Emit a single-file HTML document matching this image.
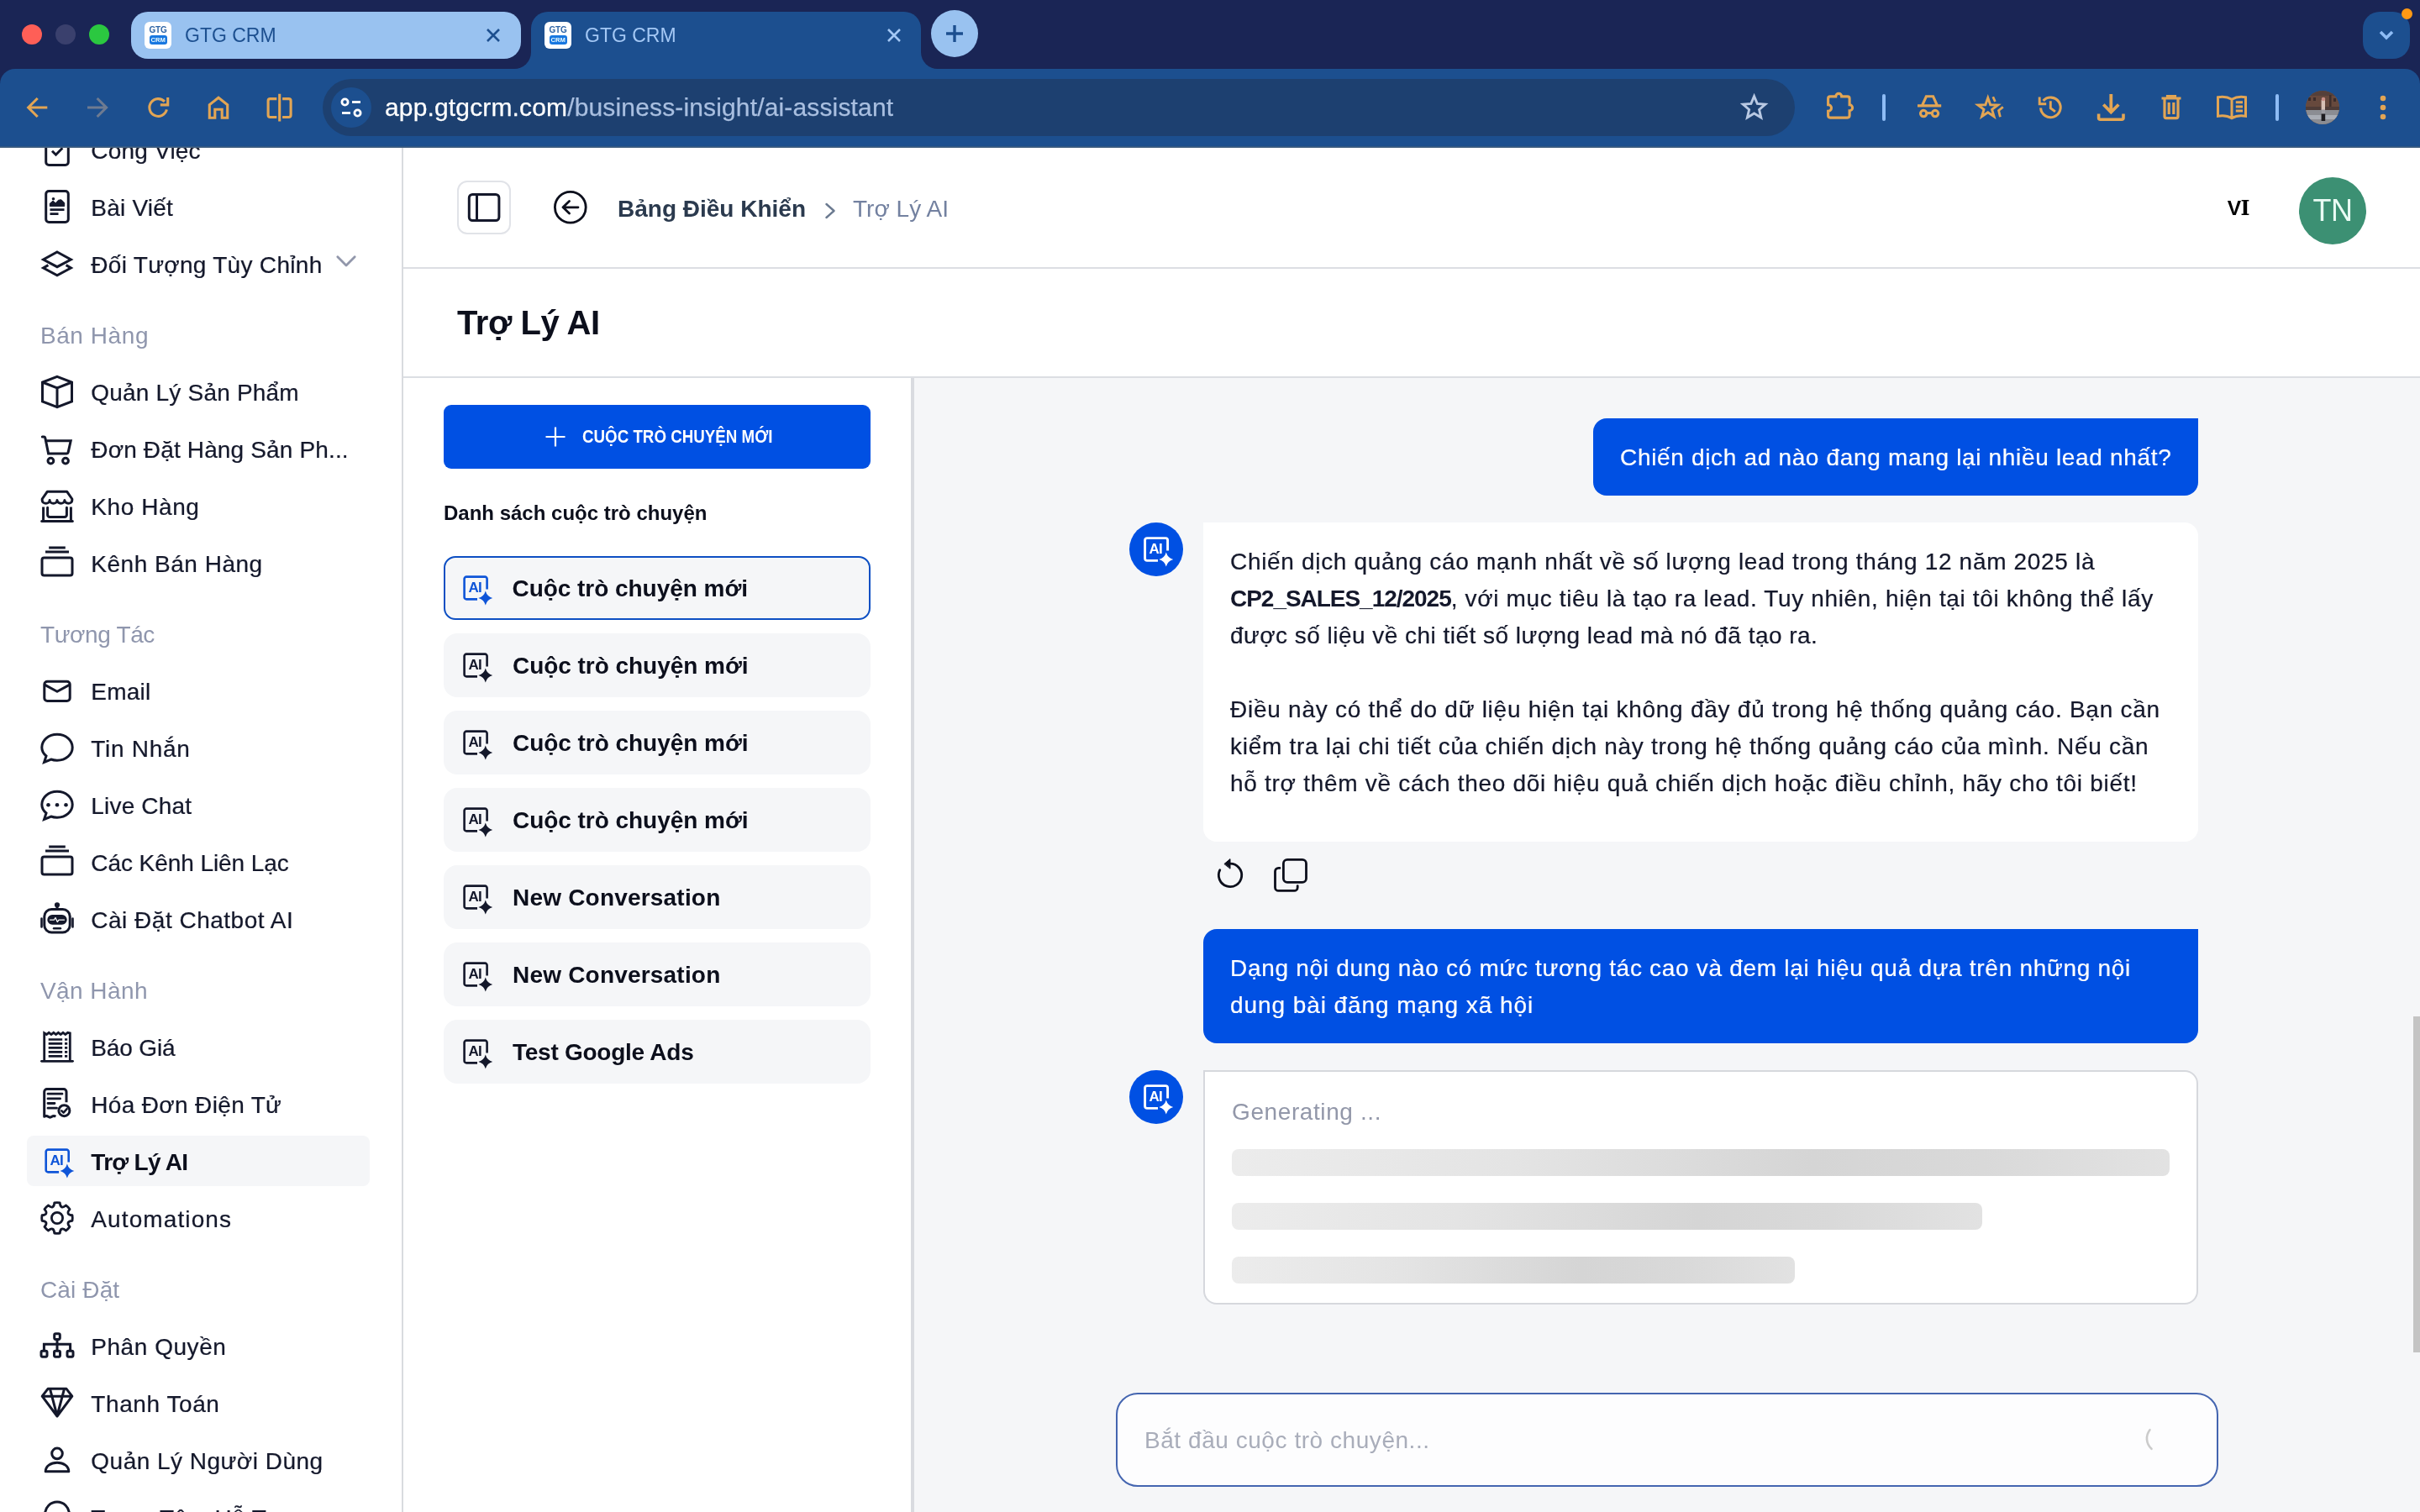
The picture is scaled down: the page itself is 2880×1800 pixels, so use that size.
<!DOCTYPE html>
<html lang="vi">
<head>
<meta charset="utf-8">
<title>GTG CRM</title>
<style>
*{box-sizing:border-box;margin:0;padding:0}
html,body{width:2880px;height:1800px;overflow:hidden;background:#fff}
body{position:relative;font-family:"Liberation Sans",sans-serif;color:#14182b;-webkit-font-smoothing:antialiased;will-change:transform}
.abs{position:absolute}
svg{display:block;overflow:visible}
.nw{white-space:nowrap}

/* ---------- browser chrome ---------- */
#strip{left:0;top:0;width:2880px;height:120px;background:#1a2555}
#toolbar{left:0;top:82px;width:2880px;height:93px;background:#1c4f8f;border-radius:18px 18px 0 0}
#toolshadow{left:0;top:173px;width:2880px;height:3px;background:linear-gradient(#1c4f8f 0,#1d4d88 33%,#3f5f82 60%,#47637f 100%);z-index:5}
.tl{width:24px;height:24px;border-radius:50%;top:29px}
#tab1{left:156px;top:14px;width:464px;height:56px;border-radius:20px;background:#99c2f0}
#tab2{left:632px;top:14px;width:464px;height:70px;border-radius:20px 20px 0 0;background:#1c4f8f}
.flare{width:20px;height:20px;top:62px;background:#1c4f8f}
.flare i{display:block;width:20px;height:20px;background:#1a2555}
.fav{width:32px;height:32px;border-radius:6px;background:#fff;top:26px;overflow:hidden}
.fav b{position:absolute;left:0;width:32px;text-align:center;font-size:10px;line-height:10px;font-weight:700;letter-spacing:-.2px}
.fav .g{top:5px;color:#2f65a6}
.fav .c{top:15.5px;left:5.5px;width:21.5px;height:11.5px;border-radius:3px;background:#1877e0;color:#e9fbff;font-size:7.6px;line-height:11.8px;letter-spacing:0}
.ttl{top:27px;font-size:23px;line-height:30px;white-space:nowrap}
#newtab{left:1108px;top:12px;width:56px;height:56px;border-radius:50%;background:#99c2f0}
#tabdd{left:2812px;top:14px;width:56px;height:56px;border-radius:20px;background:#1c4f8f}
#dot{left:2858px;top:9.5px;width:13px;height:13px;border-radius:50%;background:#ff9914}
#omni{left:384px;top:94px;width:1752px;height:68px;border-radius:34px;background:#1d4070}
#omni .ic{left:10px;top:10px;width:48px;height:48px;border-radius:50%;background:#1c4f8f}
#url{left:74px;top:15px;font-size:30px;line-height:38px;color:#fff;white-space:nowrap;letter-spacing:.15px;-webkit-text-stroke:.25px #fff}
#url span{color:#a9bfe0;-webkit-text-stroke-color:#a9bfe0}
.sep{width:4px;height:32px;top:112px;border-radius:2px;background:#8ebcf5}
#pavatar{left:2744px;top:108px;width:40px;height:40px;border-radius:50%;overflow:hidden;background:#6e5a52}

/* ---------- app ---------- */
#sidebar{left:0;top:175px;width:478px;height:1625px;background:#fff;overflow:hidden}
#sideborder{left:478px;top:175px;width:2px;height:1625px;background:#d9dbdf}
#main{left:480px;top:175px;width:2400px;height:1625px;background:#fff;overflow:hidden}

/* sidebar */
.si{position:absolute;left:32px;width:408px;height:60px;border-radius:8px;white-space:nowrap}
.si.sel{background:#f5f6f8}
.si .ico{position:absolute;left:16px;top:10px}
.si span{position:absolute;left:76.3px;top:2px;font-size:28px;line-height:60px;color:#14182b;-webkit-text-stroke:.22px #14182b}
.si.sel span{font-weight:700;color:#0c0f1c;-webkit-text-stroke:0}
.si .chev{position:absolute;left:368px;top:20px}
.sh{position:absolute;left:48px;height:44px;font-size:28px;line-height:46px;color:#8f96ad;white-space:nowrap}
/* /sidebar */

/* main */
#tgl{width:64px;height:64px;border:2px solid #e1e3e8;border-radius:12px;background:#fff}
#bc1{font-size:28px;line-height:36px;font-weight:700;color:#2b3a4e}
#bc2{font-size:28px;line-height:36px;color:#7381a0;letter-spacing:.02px}
#lang{font-size:24.6px;line-height:30px;font-weight:700;color:#000;letter-spacing:-.2px}
#lang span{font-family:"DejaVu Serif","Liberation Serif",serif;font-size:23.4px;letter-spacing:0;margin-left:-.6px}
#uav{width:80px;height:80px;border-radius:50%;background:#3c9073;color:#e9fbf4;font-size:36px;line-height:80px;text-align:center;letter-spacing:-.5px}
.hl{left:0;width:2400px;height:2px;background:#dcdee3}
#ttl{font-size:40px;line-height:50px;font-weight:700;color:#0c0f1c;letter-spacing:-.45px}
#chatbg{width:1792px;height:1351px;background:#f5f6f8}
#vdiv{width:4px;height:1351px;background:#d9dbe0}
#newbtn{width:508px;height:76px;border-radius:9px;background:#0050e3}
#newbtn span{left:165px;top:24px;font-size:21.5px;line-height:28px;font-weight:700;color:#fff;transform:scaleX(.872);transform-origin:0 50%}
#lsttl{font-size:24px;line-height:32px;font-weight:700;color:#0c0f1c}
.cv{width:508px;height:76px;border-radius:16px;background:#f5f6f8}
.cv.sel{border:2.5px solid #0d4fc3;border-radius:14px}
.cv.sel>*{margin:-2.5px 0 0 -2.5px}
.cv span{left:82px;top:22px;font-size:28px;line-height:34px;font-weight:700;color:#0c0f1c}
.ub{background:#0050e3;border-radius:16px 0 16px 16px;color:#fff;font-size:28px;line-height:44px}
.ab{background:#fff;border-radius:0 16px 16px 16px}
.tx{font-size:28px;line-height:44px;white-space:nowrap;color:#14182b;-webkit-text-stroke:.22px #14182b;margin-top:1.2px}
.tx b{letter-spacing:-1.03px;-webkit-text-stroke:0}
.aiav{width:64px;height:64px;border-radius:50%;background:#0050e3}
.gen{background:#fff;border:2px solid #d6d8dd;border-radius:0 16px 16px 16px}
.gen span{font-size:28px;line-height:44px;color:#9297a9;letter-spacing:.6px}
.sk{display:block;height:32px;border-radius:8px;background:linear-gradient(90deg,#ececec 0%,#e4e4e4 30%,#d5d5d5 62%,#d9d9d9 80%,#e2e2e2 100%)}
#inp{width:1312px;height:112px;border:2px solid #4465b0;border-radius:26px;background:#fdfdfe}
#inp span{left:32px;top:33px;font-size:28px;line-height:44px;color:#a9adba;letter-spacing:.55px}
#scr{width:8px;height:400px;background:#c4c4c4}
/* /main */
</style>
</head>
<body>

<!-- ================= BROWSER CHROME ================= -->
<div id="strip" class="abs"></div>
<div id="tab2" class="abs"></div>
<div id="toolbar" class="abs"></div>
<div id="toolshadow" class="abs"></div>
<div class="abs flare" style="left:612px"><i style="border-radius:0 0 20px 0"></i></div>
<div class="abs flare" style="left:1096px"><i style="border-radius:0 0 0 20px"></i></div>
<div id="tab1" class="abs"></div>

<div class="abs tl" style="left:26px;background:#fe5f57"></div>
<div class="abs tl" style="left:66px;background:#3a406d"></div>
<div class="abs tl" style="left:106px;background:#2bc840"></div>

<div class="abs fav" style="left:172px"><b class="g">GTG</b><b class="c">CRM</b></div>
<div class="abs ttl" style="left:220px;color:#1c4f8f">GTG CRM</div>
<svg class="abs" style="left:578px;top:33px" width="18" height="18" viewBox="0 0 18 18"><path d="M2 2L16 16M16 2L2 16" stroke="#1c4f8f" stroke-width="2.6" fill="none"/></svg>

<div class="abs fav" style="left:648px"><b class="g">GTG</b><b class="c">CRM</b></div>
<div class="abs ttl" style="left:696px;color:#a4c8f5">GTG CRM</div>
<svg class="abs" style="left:1055px;top:33px" width="18" height="18" viewBox="0 0 18 18"><path d="M2 2L16 16M16 2L2 16" stroke="#a4c8f5" stroke-width="2.6" fill="none"/></svg>

<div id="newtab" class="abs"><svg width="56" height="56" viewBox="0 0 56 56"><path d="M28 18V38M18 28H38" stroke="#1c4f8f" stroke-width="3.4" fill="none"/></svg></div>
<div id="tabdd" class="abs"><svg width="56" height="56" viewBox="0 0 56 56"><path d="M21 24L28 31L35 24" stroke="#8ebcf5" stroke-width="3.6" fill="none"/></svg></div>
<div id="dot" class="abs"></div>

<div id="omni" class="abs">
  <div class="abs ic"><svg width="48" height="48" viewBox="0 0 48 48" fill="none" stroke="#fff" stroke-width="2.8"><circle cx="16.5" cy="17.5" r="3.6"/><path d="M25 17.5H35"/><circle cx="31.5" cy="30.5" r="3.6"/><path d="M13 30.5H23"/></svg></div>
  <div id="url" class="abs">app.gtgcrm.com<span>/business-insight/ai-assistant</span></div>
</div>
<div class="abs sep" style="left:2240px"></div>
<div class="abs sep" style="left:2708px"></div>
<div id="pavatar" class="abs"></div>

<svg class="abs" style="left:0;top:82px" width="2880" height="93" viewBox="0 82 2880 93" fill="none" stroke="#e2a554" stroke-width="3.1" stroke-linejoin="miter">
  <!-- back -->
  <path d="M56.3 128H34.5M44.7 117L33.7 128L44.7 139"/>
  <!-- forward -->
  <path d="M104 128H125.8M115.6 117L126.6 128L115.6 139" stroke="#6e7b91"/>
  <!-- reload -->
  <path d="M198.4 130.4A10.4 10.4 0 1 1 195.9 120.9"/><path d="M199.7 116V124.9H190.8"/>
  <!-- home -->
  <path d="M249.3 140.3V124.7L260 116.2L270.7 124.7V140.3H264.2V130.2H255.8V140.3Z"/>
  <!-- split -->
  <path d="M329.3 117.6H321.6Q319.1 117.6 319.1 120.1V137Q319.1 139.5 321.6 139.5H329.3M332.7 111.8V144.4M336.1 117.6H343.6Q346.1 117.6 346.1 120.1V137Q346.1 139.5 343.6 139.5H336.1"/>
  <!-- bookmark star -->
  <path d="M2087.6 114.5L2091.3 123.4L2100.9 124.2L2093.6 130.5L2095.8 139.9L2087.6 134.9L2079.4 139.9L2081.6 130.5L2074.3 124.2L2083.9 123.4Z" stroke="#b9c9e3" stroke-width="2.9"/>
  <!-- extension puzzle -->
  <path d="M2175.6 124.6V117.4Q2175.6 114.9 2178.1 114.9H2184.7A3.5 3.5 0 0 1 2191.7 114.9H2198.6Q2201.1 114.9 2201.1 117.4V124.8A3.5 3.5 0 0 1 2201.1 131.8V137.6Q2201.1 140.1 2198.6 140.1H2178.1Q2175.6 140.1 2175.6 137.6V132.4A3.9 3.9 0 0 0 2175.6 124.6Z"/>
  <!-- incognito -->
  <path d="M2282 125.9H2310.2M2287.6 125.5L2292.4 114.8H2300.6L2305.4 125.5"/><circle cx="2289.2" cy="135.1" r="3.7"/><circle cx="2303" cy="135.1" r="3.7"/><path d="M2293 134.6H2299.2"/>
  <!-- star burst -->
  <path d="M2365.8 116.4L2368.7 124.8L2377.6 125.0L2370.6 130.3L2373.1 138.8L2365.8 133.8L2358.5 138.8L2361.0 130.3L2354.0 125.0L2362.9 124.8Z" stroke-width="2.9"/>
  <path d="M2371.8 115.2L2374.4 121M2383.8 127.3L2378.6 131.5L2380.4 139.3" stroke-width="2.8"/>
  <!-- history -->
  <path d="M2428.6 128.5A11.8 11.8 0 1 0 2431.6 120"/><path d="M2427.2 115.6V123.8H2435.2" stroke-width="2.9"/><path d="M2440.3 120.3V128.7L2445.9 132.9" stroke-width="2.9"/>
  <!-- download -->
  <path d="M2512.3 112V133M2503.3 124.5L2512.3 133.6L2521.3 124.5" stroke-width="3.8"/><path d="M2497.6 135.5V140.3Q2497.6 142.3 2499.6 142.3H2525Q2527 142.3 2527 140.3V135.5" stroke-width="3.6"/>
  <!-- trash -->
  <path d="M2572.5 117H2595.5M2579.5 116.5V114.5H2588.5V116.5M2576 117.5V138.6Q2576 140.6 2578 140.6H2590Q2592 140.6 2592 138.6V117.5M2581.2 122V136M2586.8 122V136" stroke-width="3.2"/>
  <!-- reading -->
  <path d="M2656 118.2C2651 115.3 2644.5 114.8 2639.5 115.8V138.2C2644.5 137.2 2651 137.7 2656 140.7C2661 137.7 2667.5 137.2 2672.5 138.2V115.8C2667.5 114.8 2661 115.3 2656 118.2ZM2656 118.2V140.7" stroke-width="3"/>
  <path d="M2660.8 121.8H2669M2660.8 126.9H2669M2660.8 132H2669" stroke-width="3"/>
  <!-- more -->
  <g fill="#e2a554" stroke="none"><circle cx="2836" cy="117" r="3.3"/><circle cx="2836" cy="128" r="3.3"/><circle cx="2836" cy="139" r="3.3"/></g>
</svg>
<svg class="abs" style="left:2744px;top:108px" width="40" height="40" viewBox="0 0 40 40"><defs><clipPath id="pc"><circle cx="20" cy="20" r="20"/></clipPath></defs><g clip-path="url(#pc)"><rect width="40" height="40" fill="#67493d"/><rect y="0" width="40" height="6" fill="#55403a"/><rect x="3" y="8" width="3" height="4" fill="#3b2c2a"/><rect x="9" y="8" width="3" height="4" fill="#3b2c2a"/><rect x="28" y="5" width="2.5" height="14" fill="#3f2f2c"/><rect x="33" y="9" width="3" height="4" fill="#3b2c2a"/><rect y="19" width="40" height="4" fill="#4e3c37"/><rect y="23" width="40" height="17" fill="#8b8d93"/><rect y="29" width="40" height="5" fill="#a9adb5"/><rect x="18.6" y="11" width="4.4" height="12" fill="#d7c1b6"/><circle cx="21" cy="10" r="2.3" fill="#c98f86"/><rect x="18.8" y="22.5" width="4.2" height="6" fill="#9a9aa0"/><rect x="18.6" y="27.5" width="4.6" height="8.5" fill="#1d1c20"/></g></svg>


<!-- ================= SIDEBAR ================= -->
<div id="sidebar" class="abs">
<!-- SIDEBAR-CONTENT -->
<div class="si" style="top:-26.8px"><svg class="ico" width="40" height="40" viewBox="0 0 40 40" fill="none" stroke="#14182b" stroke-width="3" stroke-linecap="round" stroke-linejoin="round" ><rect x="6.7" y="1.5" width="26.6" height="37" rx="3.5"/><path d="M14 21.7L18.5 26.2L26.3 18.2" stroke-linecap="butt" stroke-linejoin="miter"/></svg><span style="letter-spacing:0.2px">Công Việc</span></div>
<div class="si" style="top:41.2px"><svg class="ico" width="40" height="40" viewBox="0 0 40 40" fill="none" stroke="#14182b" stroke-width="3" stroke-linecap="round" stroke-linejoin="round" ><rect x="6.7" y="1.5" width="26.6" height="37" rx="3.5"/><circle cx="15.5" cy="10.8" r="1.8" fill="#14182b" stroke="none"/><path d="M11.3 19.2V16.2L15 13.2L18.3 15.8L21.5 12.2L25 11.8L28.7 15.5V19.2Z" fill="#14182b" stroke-width="1" /><path d="M11.5 23.6H28.5M11.5 28.6H21.5" stroke-width="2.6" stroke-linecap="butt"/></svg><span style="letter-spacing:0.22px">Bài Viết</span></div>
<div class="si" style="top:109.2px"><svg class="ico" width="40" height="40" viewBox="0 0 40 40" fill="none" stroke="#14182b" stroke-width="3" stroke-linecap="round" stroke-linejoin="round" ><path d="M20 6L36.4 15L20 23.7L3.6 15Z" stroke-linejoin="miter"/><path d="M9.4 21.6L3.6 25L20 33.8L36.4 25L30.6 21.6" stroke-linejoin="miter" stroke-linecap="butt"/></svg><span style="letter-spacing:0.3px">Đối Tượng Tùy Chỉnh</span><svg class="chev" width="24" height="14" viewBox="0 0 24 14" fill="none" stroke="#9297ab" stroke-width="2.8" stroke-linecap="round" stroke-linejoin="round"><path d="M1.8 1.8L12 12L22.2 1.8"/></svg></div>
<div class="sh" style="top:201.5px;letter-spacing:0.56px">Bán Hàng</div>
<div class="si" style="top:261.2px"><svg class="ico" width="40" height="40" viewBox="0 0 40 40" fill="none" stroke="#14182b" stroke-width="3" stroke-linecap="round" stroke-linejoin="round" ><path d="M20 2.3L37.5 9V32L20 38.7L2.5 32V9Z M2.5 9L20 15.8L37.5 9 M20 15.8V38.7" stroke-linejoin="miter"/></svg><span style="letter-spacing:0.2px">Quản Lý Sản Phẩm</span></div>
<div class="si" style="top:329.2px"><svg class="ico" width="40" height="40" viewBox="0 0 40 40" fill="none" stroke="#14182b" stroke-width="3" stroke-linecap="round" stroke-linejoin="round" ><path d="M2.3 6.1H4.2Q5.5 6.1 5.8 7.4L9.6 25.9H31.5Q32.8 25.9 33.1 24.6L36.2 10.8H6.8" stroke-linejoin="miter"/><circle cx="12.4" cy="34.6" r="3.4"/><circle cx="30" cy="34.6" r="3.4"/></svg><span style="letter-spacing:0.15px">Đơn Đặt Hàng Sản Ph...</span></div>
<div class="si" style="top:397.2px"><svg class="ico" width="40" height="40" viewBox="0 0 40 40" fill="none" stroke="#14182b" stroke-width="3" stroke-linecap="round" stroke-linejoin="round" ><path d="M8.4 3.2H31.6L37.8 12V13.5A4.45 3.8 0 0 1 28.9 13.5A4.45 3.8 0 0 1 20 13.5A4.45 3.8 0 0 1 11.1 13.5A4.45 3.8 0 0 1 2.2 13.5V12Z" stroke-linejoin="round"/><path d="M3.6 21.5V38.3M36.4 21.5V38.3" stroke-linecap="butt"/><path d="M1.7 38.5H38.3"/><path d="M8.6 22.3V30.9A2.5 2.5 0 0 0 11.1 33.4H28.9A2.5 2.5 0 0 0 31.4 30.9V22.3"/></svg><span style="letter-spacing:0.58px">Kho Hàng</span></div>
<div class="si" style="top:465.2px"><svg class="ico" width="40" height="40" viewBox="0 0 40 40" fill="none" stroke="#14182b" stroke-width="3" stroke-linecap="round" stroke-linejoin="round" ><g transform="translate(0,.4)"><path d="M10.2 1.7H29.8M6 6.7H34" stroke-linecap="butt"/><rect x="2" y="13.5" width="36" height="21" rx="2.5"/></g></svg><span style="letter-spacing:0.51px">Kênh Bán Hàng</span></div>
<div class="sh" style="top:557.5px;letter-spacing:-0.37px">Tương Tác</div>
<div class="si" style="top:617.2px"><svg class="ico" width="40" height="40" viewBox="0 0 40 40" fill="none" stroke="#14182b" stroke-width="3" stroke-linecap="round" stroke-linejoin="round" ><rect x="4.8" y="9.2" width="30.4" height="23.2" rx="3.5"/><path d="M5.5 13.4L20 21.2L34.5 13.4" stroke-linecap="butt"/></svg><span style="letter-spacing:0.24px">Email</span></div>
<div class="si" style="top:685.2px"><svg class="ico" width="40" height="40" viewBox="0 0 40 40" fill="none" stroke="#14182b" stroke-width="3" stroke-linecap="round" stroke-linejoin="round" ><path d="M20 4.2C30.4 4.2 38.2 11.2 38.2 19.7C38.2 28.2 30.4 35.2 20 35.2C17.4 35.2 14.9 34.8 12.7 34L4.6 37.3L7 29.9C3.8 27.2 1.8 23.7 1.8 19.7C1.8 11.2 9.6 4.2 20 4.2Z" stroke-linejoin="miter"/></svg><span style="letter-spacing:0.72px">Tin Nhắn</span></div>
<div class="si" style="top:753.2px"><svg class="ico" width="40" height="40" viewBox="0 0 40 40" fill="none" stroke="#14182b" stroke-width="3" stroke-linecap="round" stroke-linejoin="round" ><path d="M20 4.2C30.4 4.2 38.2 11.2 38.2 19.7C38.2 28.2 30.4 35.2 20 35.2C17.4 35.2 14.9 34.8 12.7 34L4.6 37.3L7 29.9C3.8 27.2 1.8 23.7 1.8 19.7C1.8 11.2 9.6 4.2 20 4.2Z" stroke-linejoin="miter"/><g fill="#14182b" stroke="none"><circle cx="9.5" cy="20.2" r="2.3"/><circle cx="20" cy="20.2" r="2.3"/><circle cx="30.5" cy="20.2" r="2.3"/></g></svg><span style="letter-spacing:0.18px">Live Chat</span></div>
<div class="si" style="top:821.2px"><svg class="ico" width="40" height="40" viewBox="0 0 40 40" fill="none" stroke="#14182b" stroke-width="3" stroke-linecap="round" stroke-linejoin="round" ><g transform="translate(0,.4)"><path d="M10.2 1.7H29.8M6 6.7H34" stroke-linecap="butt"/><rect x="2" y="13.5" width="36" height="21" rx="2.5"/></g></svg><span style="letter-spacing:-0.07px">Các Kênh Liên Lạc</span></div>
<div class="si" style="top:889.2px"><svg class="ico" width="40" height="40" viewBox="0 0 40 40" fill="none" stroke="#14182b" stroke-width="3" stroke-linecap="round" stroke-linejoin="round" ><g transform="translate(0,.5)"><circle cx="20" cy="2.8" r="1.6" fill="#14182b"/><path d="M20 4V7.5" stroke-linecap="butt"/><rect x="4.8" y="8" width="30.4" height="27.5" rx="8.5"/><path d="M1.5 19V29M38.5 19V29" stroke-width="2.6"/><rect x="8.3" y="14.5" width="23.4" height="11.8" rx="5.9" fill="#14182b" stroke="none"/><path d="M11.5 20.6H16.3L18 18L20.3 23L22 20.6H28.5" stroke="#fff" stroke-width="1.3"/><path d="M16 30.8H24" stroke-width="2.4"/></g></svg><span style="letter-spacing:0.5px">Cài Đặt Chatbot AI</span></div>
<div class="sh" style="top:981.5px;letter-spacing:0.42px">Vận Hành</div>
<div class="si" style="top:1041.2px"><svg class="ico" width="40" height="40" viewBox="0 0 40 40" fill="none" stroke="#14182b" stroke-width="3" stroke-linecap="round" stroke-linejoin="round" ><g transform="translate(0,1.3)"><path d="M4.7 36V2.5L7.4 4.2L10.2 2L13 4.2L15.8 2L18.6 4.2L21.4 2L24.2 4.2L27 2L29.8 4.2L32.6 2L35.3 2.5V36" stroke-linejoin="miter" stroke-linecap="butt" stroke-width="2.8"/><path d="M1.5 36H38.5" stroke-width="2.8"/><path d="M9.7 10.2H26.2M29 10.2H32.2M9.7 15H26.2M29 15H32.2M9.7 20H26.2M29 20H32.2M9.7 25H26.2M29 25H32.2M9.7 30.1H26.2M29 30.1H32.2" stroke-width="2.7" stroke-linecap="butt"/></g></svg><span style="letter-spacing:-0.16px">Báo Giá</span></div>
<div class="si" style="top:1109.2px"><svg class="ico" width="40" height="40" viewBox="0 0 40 40" fill="none" stroke="#14182b" stroke-width="3" stroke-linecap="round" stroke-linejoin="round" ><g transform="translate(0,.8)"><path d="M31 17.5V5A3.2 3.2 0 0 0 27.8 1.8H7.9A3.2 3.2 0 0 0 4.7 5V34.5C6.3 33.4 7.8 33.4 9.3 34.5C10.8 35.6 12.3 35.6 13.8 34.5C15.3 33.4 16.8 33.4 18.3 34.5" stroke-linecap="butt"/><path d="M9 7.4H26M9 13.1H23.6M9 18.7H17M9 24.4H19.5" stroke-width="2.8"/><circle cx="28.4" cy="27.4" r="6.5"/><path d="M25.3 27.5L27.6 29.8L31.6 25.4" stroke-width="2.6"/></g></svg><span style="letter-spacing:0.34px">Hóa Đơn Điện Tử</span></div>
<div class="si sel" style="top:1177.2px"><svg class="ico" width="40" height="40" viewBox="-4.1 -4 40 40" fill="none"><path d="M29.6 17.4V5.1A2.5 2.5 0 0 0 27.1 2.6H5.1A2.5 2.5 0 0 0 2.6 5.1V26.9A2.5 2.5 0 0 0 5.1 29.4H18" stroke="#0f55d8" stroke-width="2.6"/><text x="7.4" y="21.1" font-family="Liberation Sans, sans-serif" font-weight="700" font-size="17" fill="#0f55d8" letter-spacing="-.75">AI</text><path d="M27.8 19.6Q29.6 26.2 36.2 28Q29.6 29.8 27.8 36.4Q26 29.8 19.4 28Q26 26.2 27.8 19.6Z" fill="#0f55d8"/></svg><span style="letter-spacing:-0.72px">Trợ Lý AI</span></div>
<div class="si" style="top:1245.2px"><svg class="ico" width="40" height="40" viewBox="0 0 40 40" fill="none" stroke="#14182b" stroke-width="3" stroke-linecap="round" stroke-linejoin="round" ><path d="M16.71 2.00A18.3 18.3 0 0 1 23.29 2.00Q23.43 5.93 25.43 6.88Q27.52 7.62 30.40 4.95L30.40 4.95A18.3 18.3 0 0 1 35.05 9.60Q32.38 12.48 33.12 14.57Q34.07 16.57 38.00 16.71L38.00 16.71A18.3 18.3 0 0 1 38.00 23.29Q34.07 23.43 33.12 25.43Q32.38 27.52 35.05 30.40L35.05 30.40A18.3 18.3 0 0 1 30.40 35.05Q27.52 32.38 25.43 33.12Q23.43 34.07 23.29 38.00L23.29 38.00A18.3 18.3 0 0 1 16.71 38.00Q16.57 34.07 14.57 33.12Q12.48 32.38 9.60 35.05L9.60 35.05A18.3 18.3 0 0 1 4.95 30.40Q7.62 27.52 6.88 25.43Q5.93 23.43 2.00 23.29L2.00 23.29A18.3 18.3 0 0 1 2.00 16.71Q5.93 16.57 6.88 14.57Q7.62 12.48 4.95 9.60L4.95 9.60A18.3 18.3 0 0 1 9.60 4.95Q12.48 7.62 14.57 6.88Q16.57 5.93 16.71 2.00Z" stroke-linejoin="round" stroke-width="2.8"/><circle cx="20" cy="20" r="6.6" stroke-width="2.8"/></svg><span style="letter-spacing:1.11px">Automations</span></div>
<div class="sh" style="top:1337.5px;letter-spacing:0.13px">Cài Đặt</div>
<div class="si" style="top:1397.2px"><svg class="ico" width="40" height="40" viewBox="0 0 40 40" fill="none" stroke="#14182b" stroke-width="3" stroke-linecap="round" stroke-linejoin="round" ><rect x="16.7" y="5.8" width="6.6" height="6.6" rx="1.6"/><path d="M20 12.5V25M4.4 25V18.3H35.6V25" stroke-linecap="butt" stroke-linejoin="miter"/><rect x="1" y="26.2" width="7" height="7" rx="1.6"/><rect x="16.5" y="26.2" width="7" height="7" rx="1.6"/><rect x="32" y="26.2" width="7" height="7" rx="1.6"/></svg><span style="letter-spacing:0.54px">Phân Quyền</span></div>
<div class="si" style="top:1465.2px"><svg class="ico" width="40" height="40" viewBox="0 0 40 40" fill="none" stroke="#14182b" stroke-width="3" stroke-linecap="round" stroke-linejoin="round" ><path d="M9 3.3H31L37.8 12.2L20 36L2.2 12.2Z M2.2 12.2H37.8 M11.6 3.8L20 35.5L28.4 3.8" stroke-linejoin="round"/></svg><span style="letter-spacing:0.58px">Thanh Toán</span></div>
<div class="si" style="top:1533.2px"><svg class="ico" width="40" height="40" viewBox="0 0 40 40" fill="none" stroke="#14182b" stroke-width="3" stroke-linecap="round" stroke-linejoin="round" ><circle cx="20" cy="12.4" r="6.3"/><path d="M6.2 33.8C6.2 27.5 12.3 23.2 20 23.2C27.7 23.2 33.8 27.5 33.8 33.8Z"/></svg><span style="letter-spacing:0.49px">Quản Lý Người Dùng</span></div>
<div class="si" style="top:1601.2px"><svg class="ico" width="40" height="40" viewBox="0 0 40 40" fill="none" stroke="#14182b" stroke-width="3" stroke-linecap="round" stroke-linejoin="round" ><path d="M5.6 25V16.4A14.4 14.4 0 0 1 34.4 16.4V25"/><rect x="5.6" y="21" width="6" height="11" rx="2.5"/><rect x="28.4" y="21" width="6" height="11" rx="2.5"/></svg><span style="letter-spacing:0.4px">Trung Tâm Hỗ Trợ</span></div>
<!-- /SIDEBAR-CONTENT -->
</div>
<div id="sideborder" class="abs"></div>

<!-- ================= MAIN ================= -->
<div id="main" class="abs">
<!-- MAIN-CONTENT -->
<div class="abs" id="tgl" style="left:64px;top:40px"><svg style="margin:-2px 0 0 -2px" width="64" height="64" viewBox="0 0 64 64" fill="none" stroke="#14182b" stroke-width="3"><rect x="14.3" y="16.5" width="35.6" height="31" rx="4"/><path d="M23.5 16.5V47.5"/></svg></div>
<svg class="abs" style="left:177px;top:50px" width="44" height="44" viewBox="0 0 44 44" fill="none" stroke="#0c0f1c" stroke-width="2.8"><circle cx="21.8" cy="21.8" r="18.4"/><path d="M31 21.8H13.5M20.5 14.5L13 21.8L20.5 29.1" stroke-linecap="round" stroke-linejoin="round"/></svg>
<div class="abs nw" id="bc1" style="left:255px;top:55.5px">Bảng Điều Khiển</div>
<svg class="abs" style="left:501px;top:66px" width="14" height="20" viewBox="0 0 14 20" fill="none" stroke="#6b7a90" stroke-width="2.4" stroke-linecap="round" stroke-linejoin="round"><path d="M2.5 2L11.5 10L2.5 18"/></svg>
<div class="abs nw" id="bc2" style="left:535px;top:55.5px">Trợ Lý AI</div>
<div class="abs nw" id="lang" style="left:2170.8px;top:58.19999999999999px">V<span>I</span></div>
<div class="abs" id="uav" style="left:2256px;top:36px">TN</div>
<div class="abs hl" style="top:143px"></div>
<div class="abs nw" id="ttl" style="left:64px;top:184px">Trợ Lý AI</div>
<div class="abs hl" style="top:273px"></div>
<div class="abs" id="chatbg" style="left:608px;top:275px"></div>
<div class="abs" id="vdiv" style="left:604px;top:275px"></div>
<div class="abs" id="newbtn" style="left:48px;top:307px"><svg class="abs" style="left:121px;top:26px" width="24" height="24" viewBox="0 0 24 24" stroke="#fff" stroke-width="2.2" fill="none"><path d="M12 0.5V23.5M0.5 12H23.5"/></svg><span class="abs nw">CUỘC TRÒ CHUYỆN MỚI</span></div>
<div class="abs nw" id="lsttl" style="left:48px;top:419.79999999999995px">Danh sách cuộc trò chuyện</div>
<div class="abs cv sel" style="left:48px;top:487px"><div class="abs" style="left:22px;top:22px"><svg width="36" height="36" viewBox="0 0 36 36" fill="none"><path d="M29.6 17.4V5.1A2.5 2.5 0 0 0 27.1 2.6H5.1A2.5 2.5 0 0 0 2.6 5.1V26.9A2.5 2.5 0 0 0 5.1 29.4H18" stroke="#0f55d8" stroke-width="2.6"/><text x="7.4" y="21.1" font-family="Liberation Sans, sans-serif" font-weight="700" font-size="17" fill="#0f55d8" letter-spacing="-.75">AI</text><path d="M27.8 19.6Q29.6 26.2 36.2 28Q29.6 29.8 27.8 36.4Q26 29.8 19.4 28Q26 26.2 27.8 19.6Z" fill="#0f55d8"/></svg></div><span class="abs nw" style="letter-spacing:-.04px">Cuộc trò chuyện mới</span></div>
<div class="abs cv" style="left:48px;top:579px"><div class="abs" style="left:22px;top:22px"><svg width="36" height="36" viewBox="0 0 36 36" fill="none"><path d="M29.6 17.4V5.1A2.5 2.5 0 0 0 27.1 2.6H5.1A2.5 2.5 0 0 0 2.6 5.1V26.9A2.5 2.5 0 0 0 5.1 29.4H18" stroke="#14182b" stroke-width="2.6"/><text x="7.4" y="21.1" font-family="Liberation Sans, sans-serif" font-weight="700" font-size="17" fill="#14182b" letter-spacing="-.75">AI</text><path d="M27.8 19.6Q29.6 26.2 36.2 28Q29.6 29.8 27.8 36.4Q26 29.8 19.4 28Q26 26.2 27.8 19.6Z" fill="#14182b"/></svg></div><span class="abs nw" style="letter-spacing:-.04px">Cuộc trò chuyện mới</span></div>
<div class="abs cv" style="left:48px;top:671px"><div class="abs" style="left:22px;top:22px"><svg width="36" height="36" viewBox="0 0 36 36" fill="none"><path d="M29.6 17.4V5.1A2.5 2.5 0 0 0 27.1 2.6H5.1A2.5 2.5 0 0 0 2.6 5.1V26.9A2.5 2.5 0 0 0 5.1 29.4H18" stroke="#14182b" stroke-width="2.6"/><text x="7.4" y="21.1" font-family="Liberation Sans, sans-serif" font-weight="700" font-size="17" fill="#14182b" letter-spacing="-.75">AI</text><path d="M27.8 19.6Q29.6 26.2 36.2 28Q29.6 29.8 27.8 36.4Q26 29.8 19.4 28Q26 26.2 27.8 19.6Z" fill="#14182b"/></svg></div><span class="abs nw" style="letter-spacing:-.04px">Cuộc trò chuyện mới</span></div>
<div class="abs cv" style="left:48px;top:763px"><div class="abs" style="left:22px;top:22px"><svg width="36" height="36" viewBox="0 0 36 36" fill="none"><path d="M29.6 17.4V5.1A2.5 2.5 0 0 0 27.1 2.6H5.1A2.5 2.5 0 0 0 2.6 5.1V26.9A2.5 2.5 0 0 0 5.1 29.4H18" stroke="#14182b" stroke-width="2.6"/><text x="7.4" y="21.1" font-family="Liberation Sans, sans-serif" font-weight="700" font-size="17" fill="#14182b" letter-spacing="-.75">AI</text><path d="M27.8 19.6Q29.6 26.2 36.2 28Q29.6 29.8 27.8 36.4Q26 29.8 19.4 28Q26 26.2 27.8 19.6Z" fill="#14182b"/></svg></div><span class="abs nw" style="letter-spacing:-.04px">Cuộc trò chuyện mới</span></div>
<div class="abs cv" style="left:48px;top:855px"><div class="abs" style="left:22px;top:22px"><svg width="36" height="36" viewBox="0 0 36 36" fill="none"><path d="M29.6 17.4V5.1A2.5 2.5 0 0 0 27.1 2.6H5.1A2.5 2.5 0 0 0 2.6 5.1V26.9A2.5 2.5 0 0 0 5.1 29.4H18" stroke="#14182b" stroke-width="2.6"/><text x="7.4" y="21.1" font-family="Liberation Sans, sans-serif" font-weight="700" font-size="17" fill="#14182b" letter-spacing="-.75">AI</text><path d="M27.8 19.6Q29.6 26.2 36.2 28Q29.6 29.8 27.8 36.4Q26 29.8 19.4 28Q26 26.2 27.8 19.6Z" fill="#14182b"/></svg></div><span class="abs nw" style="letter-spacing:.2px">New Conversation</span></div>
<div class="abs cv" style="left:48px;top:947px"><div class="abs" style="left:22px;top:22px"><svg width="36" height="36" viewBox="0 0 36 36" fill="none"><path d="M29.6 17.4V5.1A2.5 2.5 0 0 0 27.1 2.6H5.1A2.5 2.5 0 0 0 2.6 5.1V26.9A2.5 2.5 0 0 0 5.1 29.4H18" stroke="#14182b" stroke-width="2.6"/><text x="7.4" y="21.1" font-family="Liberation Sans, sans-serif" font-weight="700" font-size="17" fill="#14182b" letter-spacing="-.75">AI</text><path d="M27.8 19.6Q29.6 26.2 36.2 28Q29.6 29.8 27.8 36.4Q26 29.8 19.4 28Q26 26.2 27.8 19.6Z" fill="#14182b"/></svg></div><span class="abs nw" style="letter-spacing:.2px">New Conversation</span></div>
<div class="abs cv" style="left:48px;top:1039px"><div class="abs" style="left:22px;top:22px"><svg width="36" height="36" viewBox="0 0 36 36" fill="none"><path d="M29.6 17.4V5.1A2.5 2.5 0 0 0 27.1 2.6H5.1A2.5 2.5 0 0 0 2.6 5.1V26.9A2.5 2.5 0 0 0 5.1 29.4H18" stroke="#14182b" stroke-width="2.6"/><text x="7.4" y="21.1" font-family="Liberation Sans, sans-serif" font-weight="700" font-size="17" fill="#14182b" letter-spacing="-.75">AI</text><path d="M27.8 19.6Q29.6 26.2 36.2 28Q29.6 29.8 27.8 36.4Q26 29.8 19.4 28Q26 26.2 27.8 19.6Z" fill="#14182b"/></svg></div><span class="abs nw" style="letter-spacing:-.26px">Test Google Ads</span></div>
<div class="abs ub" style="left:1416px;top:323px;width:720px;height:92px"><span class="abs nw" style="left:32px;top:25.2px;letter-spacing:.67px;-webkit-text-stroke:.22px #fff">Chiến dịch ad nào đang mang lại nhiều lead nhất?</span></div>
<div class="abs aiav" style="left:864px;top:447px"><div class="abs" style="left:15.8px;top:15.8px"><svg width="36" height="36" viewBox="0 0 36 36" fill="none"><path d="M29.6 17.4V5.1A2.5 2.5 0 0 0 27.1 2.6H5.1A2.5 2.5 0 0 0 2.6 5.1V26.9A2.5 2.5 0 0 0 5.1 29.4H18" stroke="#fff" stroke-width="2.9"/><text x="7.4" y="21.1" font-family="Liberation Sans, sans-serif" font-weight="700" font-size="17" fill="#fff" letter-spacing="-.75">AI</text><path d="M27.8 19.6Q29.6 26.2 36.2 28Q29.6 29.8 27.8 36.4Q26 29.8 19.4 28Q26 26.2 27.8 19.6Z" fill="#fff"/></svg></div></div>
<div class="abs ab" style="left:952px;top:447px;width:1184px;height:380px"><div class="abs tx" style="left:32px;top:24px"><span class="ln" style="letter-spacing:.68px">Chiến dịch quảng cáo mạnh nhất về số lượng lead trong tháng 12 năm 2025 là</span><br><span class="ln" style="letter-spacing:.65px"><b>CP2_SALES_12/2025</b>, với mục tiêu là tạo ra lead. Tuy nhiên, hiện tại tôi không thể lấy</span><br><span class="ln" style="letter-spacing:.47px">được số liệu về chi tiết số lượng lead mà nó đã tạo ra.</span><br><br><span class="ln" style="letter-spacing:.74px">Điều này có thể do dữ liệu hiện tại không đầy đủ trong hệ thống quảng cáo. Bạn cần</span><br><span class="ln" style="letter-spacing:.72px">kiểm tra lại chi tiết của chiến dịch này trong hệ thống quảng cáo của mình. Nếu cần</span><br><span class="ln" style="letter-spacing:.71px">hỗ trợ thêm về cách theo dõi hiệu quả chiến dịch hoặc điều chỉnh, hãy cho tôi biết!</span></div></div>
<svg class="abs" style="left:964px;top:846px" width="40" height="40" viewBox="0 0 40 40" fill="none" stroke="#0c0f1c" stroke-width="2.8" stroke-linecap="round" stroke-linejoin="round"><path d="M20 7.2A13.7 13.7 0 1 1 7.8 14.7"/><path d="M13.2 7.3L20 1.6V12.8Z" fill="#0c0f1c" stroke-width="1"/></svg>
<svg class="abs" style="left:1034px;top:845px" width="44" height="44" viewBox="0 0 44 44" fill="none" stroke="#0c0f1c" stroke-width="2.8" stroke-linecap="round" stroke-linejoin="round"><rect x="13.4" y="3.3" width="27.1" height="27.1" rx="4.6"/><path d="M9 13.4H7.5A4 4 0 0 0 3.5 17.4V36.4A4 4 0 0 0 7.5 40.4H26.2A4 4 0 0 0 30.2 36.4V34.6"/></svg>
<div class="abs ub" style="left:952px;top:931px;width:1184px;height:136px"><div class="abs tx" style="left:32px;top:24px;color:#fff;-webkit-text-stroke-color:#fff"><span class="ln" style="letter-spacing:.7px">Dạng nội dung nào có mức tương tác cao và đem lại hiệu quả dựa trên những nội</span><br><span class="ln" style="letter-spacing:.93px">dung bài đăng mạng xã hội</span></div></div>
<div class="abs aiav" style="left:864px;top:1099px"><div class="abs" style="left:15.8px;top:15.8px"><svg width="36" height="36" viewBox="0 0 36 36" fill="none"><path d="M29.6 17.4V5.1A2.5 2.5 0 0 0 27.1 2.6H5.1A2.5 2.5 0 0 0 2.6 5.1V26.9A2.5 2.5 0 0 0 5.1 29.4H18" stroke="#fff" stroke-width="2.9"/><text x="7.4" y="21.1" font-family="Liberation Sans, sans-serif" font-weight="700" font-size="17" fill="#fff" letter-spacing="-.75">AI</text><path d="M27.8 19.6Q29.6 26.2 36.2 28Q29.6 29.8 27.8 36.4Q26 29.8 19.4 28Q26 26.2 27.8 19.6Z" fill="#fff"/></svg></div></div>
<div class="abs gen" style="left:952px;top:1099px;width:1184px;height:279px"><span class="abs nw" style="left:32px;top:26px">Generating ...</span><i class="abs sk" style="left:32px;top:92px;width:1116px"></i><i class="abs sk" style="left:32px;top:156px;width:893px"></i><i class="abs sk" style="left:32px;top:220px;width:670px"></i></div>
<div class="abs" id="inp" style="left:848px;top:1483px"><span class="abs nw">Bắt đầu cuộc trò chuyện...</span><svg class="abs" style="left:1214.5px;top:37.5px" width="20" height="32" viewBox="0 0 20 32" fill="none" stroke="#cbcbcb" stroke-width="2.6" stroke-linecap="round"><path d="M13.5 4.2A16.5 16.5 0 0 0 15.5 26.8"/></svg></div>
<div class="abs" id="scr" style="left:2392px;top:1035px"></div>
<!-- /MAIN-CONTENT -->
</div>

</body>
</html>
